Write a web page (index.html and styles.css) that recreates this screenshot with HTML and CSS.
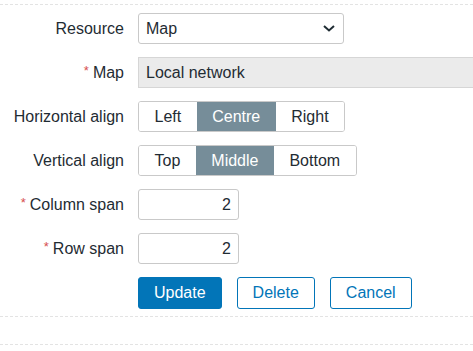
FILE: index.html
```html
<!DOCTYPE html>
<html lang="en">
<head>
  <meta charset="UTF-8">
  <title>Widget form</title>
  <link rel="stylesheet" href="styles.css">
</head>
<body>

  <div class="rule top"></div>

  <form class="form-grid">
    <label class="label">Resource</label>
    <div class="field">
      <div class="select">
        <span>Map</span>
        <svg width="12" height="7" viewBox="0 0 12 7"><polyline points="1,1 6,5.5 11,1" fill="none" stroke="#1f2c33" stroke-width="2"/></svg>
      </div>
    </div>

    <label class="label"><span class="req">*</span> Map</label>
    <div class="field">
      <div class="readonly">Local network</div>
    </div>

    <label class="label">Horizontal align</label>
    <div class="field">
      <div class="segmented">
        <span class="seg">Left</span>
        <span class="seg on">Centre</span>
        <span class="seg">Right</span>
      </div>
    </div>

    <label class="label">Vertical align</label>
    <div class="field">
      <div class="segmented">
        <span class="seg">Top</span>
        <span class="seg on">Middle</span>
        <span class="seg">Bottom</span>
      </div>
    </div>

    <label class="label"><span class="req">*</span> Column span</label>
    <div class="field">
      <input class="num" type="text" value="2">
    </div>

    <label class="label"><span class="req">*</span> Row span</label>
    <div class="field">
      <input class="num" type="text" value="2">
    </div>

    <div></div>
    <div class="buttons">
      <button type="button" class="btn primary">Update</button>
      <button type="button" class="btn alt">Delete</button>
      <button type="button" class="btn alt">Cancel</button>
    </div>
  </form>

  <div class="rule bottom"></div>
  <div class="rule last"></div>

</body>
</html>
```

FILE: styles.css
```css
body {
  margin: 0;
  background-color: #fff;
  font-family: "Liberation Sans", Arial, sans-serif;
  font-size: 16px;
  color: #1f2c33;
  overflow: hidden;
}

.rule {
  border-top: 1px dashed #e3e3e3;
}

.rule.top {
  margin-top: 4px;
}

.rule.bottom {
  margin-top: 7px;
}

.rule.last {
  margin-top: 27px;
}

.form-grid {
  display: grid;
  grid-template-columns: 124px 1fr;
  column-gap: 14px;
  row-gap: 13px;
  padding-top: 8px;
  margin: 0;
}

.label {
  display: flex;
  align-items: center;
  justify-content: flex-end;
  height: 31px;
  white-space: nowrap;
}

.req {
  color: #d64e4e;
  font-size: 13px;
  margin-right: 4px;
  position: relative;
  top: -2px;
}

.field {
  display: flex;
  align-items: center;
  height: 31px;
}

.select {
  box-sizing: border-box;
  width: 206px;
  height: 31px;
  border: 1px solid #c9c9c9;
  border-radius: 3px;
  display: flex;
  align-items: center;
  justify-content: space-between;
  padding: 0 8px 0 7px;
}

.readonly {
  box-sizing: border-box;
  width: 340px;
  height: 31px;
  border: 1px solid #d6d6d6;
  border-right: none;
  background-color: #ebebeb;
  display: flex;
  align-items: center;
  padding-left: 7px;
}

.segmented {
  display: flex;
  height: 31px;
  border: 1px solid #c9c9c9;
  border-radius: 3px;
  box-sizing: border-box;
  overflow: hidden;
}

.seg {
  display: flex;
  align-items: center;
  padding: 0 15.5px;
  background-color: #fff;
}

.seg.on {
  background-color: #768d99;
  color: #fff;
}

.num {
  box-sizing: border-box;
  width: 101px;
  height: 31px;
  border: 1px solid #c9c9c9;
  border-radius: 3px;
  padding: 0 7px;
  text-align: right;
  font-family: inherit;
  font-size: 16px;
  color: #1f2c33;
  outline: none;
}

.buttons {
  display: flex;
  gap: 15px;
  height: 32px;
}

.btn {
  box-sizing: border-box;
  height: 32px;
  padding: 0 15px;
  border-radius: 3px;
  font-family: inherit;
  font-size: 16px;
  cursor: pointer;
}

.btn.primary {
  background-color: #0275b8;
  border: 1px solid #0275b8;
  color: #fff;
}

.btn.alt {
  background-color: #fff;
  border: 1px solid #0275b8;
  color: #0275b8;
}
```
